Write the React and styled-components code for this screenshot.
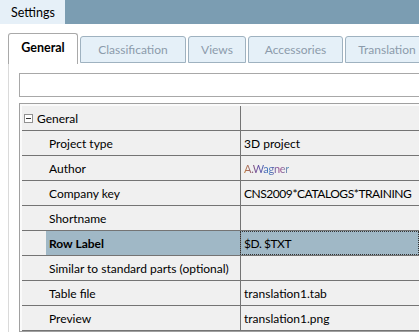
import React from 'react';
import styled, { createGlobalStyle } from 'styled-components';

const GlobalStyle = createGlobalStyle`
  body {
    margin: 0;
    background: #fff;
    font-family: Lato, "Liberation Sans", Arial, sans-serif;
    font-size: 12px;
    color: #000;
    overflow: hidden;
  }
`;

const tabs = [
  { label: 'General', width: 70, active: true },
  { label: 'Classification', width: 106 },
  { label: 'Views', width: 58 },
  { label: 'Accessories', width: 95 },
  { label: 'Translation', width: 84 },
];

const rows = [
  { name: 'Project type', value: '3D project' },
  { name: 'Author', value: 'A.Wagner', blurred: true },
  { name: 'Company key', value: 'CNS2009*CATALOGS*TRAINING', caps: true },
  { name: 'Shortname', value: '' },
  { name: 'Row Label', value: '$D. $TXT', selected: true, caps: true },
  { name: 'Similar to standard parts (optional)', value: '' },
  { name: 'Table file', value: 'translation1.tab' },
  { name: 'Preview', value: 'translation1.png' },
];

const App = () => {
  return (
    <Page>
      <GlobalStyle />
      <TitleBar>
        <TitleTab>Settings</TitleTab>
      </TitleBar>
      <Body>
        <TabStrip>
          {tabs.map(t => (
            <Tab key={t.label} $active={t.active} $width={t.width}>
              {t.label}
            </Tab>
          ))}
        </TabStrip>
        <Panel>
          <SearchBox />
          <Grid>
            <Row>
              <Category>
                <ToggleBox>
                  <svg width="9" height="9" viewBox="0 0 9 9">
                    <rect x="0.5" y="0.5" width="8" height="8" fill="#fff" stroke="#919191" />
                    <line x1="2" y1="4.5" x2="7" y2="4.5" stroke="#333" />
                  </svg>
                </ToggleBox>
                General
              </Category>
              <ValueCell />
            </Row>
            {rows.map(r => (
              <Row key={r.name}>
                <Gutter />
                <NameCell $selected={r.selected}>{r.name}</NameCell>
                <ValueCell $selected={r.selected} $caps={r.caps}>
                  {r.blurred ? <Blurred>{r.value}</Blurred> : r.value}
                </ValueCell>
              </Row>
            ))}
          </Grid>
        </Panel>
      </Body>
    </Page>
  );
};
export default App;

const Page = styled.div`
  width: 419px;
  height: 332px;
  overflow: hidden;
  display: flex;
  flex-direction: column;
`;

const TitleBar = styled.div`
  height: 24px;
  background: #7b9db2;
  display: flex;
  flex-shrink: 0;
`;

const TitleTab = styled.div`
  width: 65px;
  background: #e6f0f8;
  display: flex;
  align-items: center;
  padding-left: 11px;
  box-sizing: border-box;
  font-size: 12.5px;
`;

const Body = styled.div`
  flex: 1;
  padding: 9px 0 0 8px;
  display: flex;
  flex-direction: column;
  min-height: 0;
`;

const TabStrip = styled.div`
  display: flex;
  align-items: flex-start;
  height: 30px;
  gap: 2px;
  flex-shrink: 0;
`;

const Tab = styled.div`
  width: ${p => p.$width}px;
  flex-shrink: 0;
  box-sizing: border-box;
  height: ${p => (p.$active ? '31px' : '27px')};
  margin-top: ${p => (p.$active ? '0' : '3px')};
  border: 1px solid ${p => (p.$active ? '#a9a9a9' : '#9fb2c0')};
  border-bottom: ${p => (p.$active ? 'none' : '1px solid #9fb2c0')};
  border-radius: 3px 3px 0 0;
  background: ${p => (p.$active ? '#fff' : '#e5f0f8')};
  color: ${p => (p.$active ? '#000' : '#8c9bab')};
  font-weight: ${p => (p.$active ? 'bold' : 'normal')};
  font-size: ${p => (p.$active ? '12.5px' : '12px')};
  display: flex;
  align-items: center;
  justify-content: center;
  padding-bottom: ${p => (p.$active ? '3px' : '0')};
  position: relative;
  z-index: ${p => (p.$active ? 1 : 0)};
  white-space: nowrap;
  overflow: hidden;
`;

const Panel = styled.div`
  flex: 1;
  border-left: 1px solid #dadada;
  padding: 10px 0 0 10px;
  display: flex;
  flex-direction: column;
  gap: 6px;
  min-height: 0;
`;

const SearchBox = styled.div`
  height: 24px;
  box-sizing: border-box;
  border: 1px solid #a8a8a8;
  border-right: none;
  flex-shrink: 0;
  background: #fff;
`;

const Grid = styled.div`
  border: 1px solid #a0a0a0;
  border-right: none;
  padding: 2px 0 0 2px;
  background: #fafafa;
  flex: 1;
`;

const Row = styled.div`
  display: grid;
  grid-template-columns: 24px 194px 1fr;
  height: 25px;
  box-sizing: border-box;
  border-bottom: 1px solid #747474;
  background: #f0f0f0;
`;

const Category = styled.div`
  grid-column: 1 / 3;
  display: flex;
  align-items: center;
  padding-left: 2px;
  gap: 4px;
`;

const ToggleBox = styled.span`
  display: flex;
  width: 9px;
  height: 9px;
`;

const Gutter = styled.div``;

const NameCell = styled.div`
  display: flex;
  align-items: center;
  padding-left: 3px;
  background: ${p => (p.$selected ? '#a0b8c6' : 'transparent')};
  font-weight: ${p => (p.$selected ? 'bold' : 'normal')};
  white-space: nowrap;
  overflow: hidden;
`;

const ValueCell = styled.div`
  display: flex;
  align-items: center;
  padding-left: 3px;
  border-left: 1px solid #747474;
  background: ${p => (p.$selected ? '#a0b8c6' : 'transparent')};
  outline: ${p => (p.$selected ? '1px dotted #333' : 'none')};
  outline-offset: -1px;
  letter-spacing: ${p => (p.$caps ? '-0.45px' : 'normal')};
  white-space: nowrap;
  overflow: hidden;
`;

const Blurred = styled.span`
  font-size: 11px;
  letter-spacing: -0.3px;
  filter: blur(0.7px);
  background: linear-gradient(90deg, #c07a3a, #6a4aa0 30%, #3a7ac0 55%, #a04a8a 80%, #5aa0c0);
  -webkit-background-clip: text;
  background-clip: text;
  color: transparent;
`;
